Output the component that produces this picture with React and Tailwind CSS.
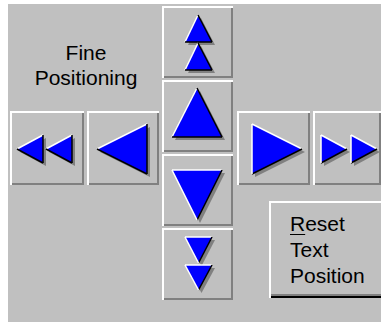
import React from "react";

function Tri({ pts }) {
  const cx = pts.reduce((s, p) => s + p[0], 0) / pts.length;
  const cy = pts.reduce((s, p) => s + p[1], 0) / pts.length;
  const str = (arr) => arr.map((p) => p.join(",")).join(" ");
  const shadow = pts.map((p) => [p[0] + 3, p[1] + 3]);
  const edges = pts.map((p, i) => {
    const q = pts[(i + 1) % pts.length];
    let nx = q[1] - p[1];
    let ny = -(q[0] - p[0]);
    const mx = (p[0] + q[0]) / 2 - cx;
    const my = (p[1] + q[1]) / 2 - cy;
    if (nx * mx + ny * my < 0) {
      nx = -nx;
      ny = -ny;
    }
    const light = nx + ny < 0;
    return (
      <line
        key={i}
        x1={p[0]}
        y1={p[1]}
        x2={q[0]}
        y2={q[1]}
        stroke={light ? "#ffffff" : "#000000"}
        strokeWidth="1.5"
      />
    );
  });
  return (
    <g>
      <polygon points={str(shadow)} fill="#808080" />
      <polygon points={str(pts)} fill="#0000ff" />
      {edges}
    </g>
  );
}

function ArrowButton({ w, h, tris }) {
  return (
    <div
      className="bg-[#c0c0c0] shadow-[inset_2px_2px_0_#ffffff,inset_-2px_-2px_0_#808080] shrink-0"
      style={{ width: w, height: h }}
    >
      <svg width={w} height={h} viewBox={`0 0 ${w} ${h}`} className="block">
        {tris.map((t, i) => (
          <Tri key={i} pts={t} />
        ))}
      </svg>
    </div>
  );
}

export default function App() {
  const font = { fontFamily: '"Liberation Sans", Arial, sans-serif' };
  return (
    <div className="w-[381px] h-[322px] bg-white overflow-hidden pl-[8px] pt-[4px]">
      <div
        className="w-[373px] h-[318px] bg-[#c0c0c0] flex overflow-hidden text-black"
        style={font}
      >
        {/* left column */}
        <div className="w-[154px] shrink-0 flex flex-col pt-[36px]">
          <div className="h-[50px] text-[21px] leading-[25px] text-center pl-[2px]">
            <div>Fine</div>
            <div>Positioning</div>
          </div>
          <div className="mt-[21px] pl-[2px] flex gap-[3px]">
            <ArrowButton
              w={74}
              h={74}
              tris={[
                [
                  [7, 38],
                  [33, 24],
                  [33, 52],
                ],
                [
                  [36, 38],
                  [62, 24],
                  [62, 52],
                ],
              ]}
            />
            <ArrowButton
              w={72}
              h={74}
              tris={[
                [
                  [10, 38],
                  [60, 13],
                  [60, 63],
                ],
              ]}
            />
          </div>
        </div>

        {/* center column */}
        <div className="w-[71px] shrink-0 flex flex-col gap-[2px] pt-[2px]">
          <ArrowButton
            w={71}
            h={72}
            tris={[
              [
                [36, 9],
                [23, 36],
                [50, 36],
              ],
              [
                [36, 37],
                [23, 64],
                [50, 64],
              ],
            ]}
          />
          <ArrowButton
            w={71}
            h={72}
            tris={[
              [
                [35, 8],
                [10, 57],
                [60, 57],
              ],
            ]}
          />
          <ArrowButton
            w={71}
            h={72}
            tris={[
              [
                [10, 16],
                [60, 16],
                [35, 66],
              ],
            ]}
          />
          <ArrowButton
            w={71}
            h={72}
            tris={[
              [
                [23, 9],
                [50, 9],
                [36.5, 35],
              ],
              [
                [23, 37],
                [50, 37],
                [36.5, 62],
              ],
            ]}
          />
        </div>

        {/* right column */}
        <div className="w-[148px] shrink-0 pl-[4px] pt-[107px] flex flex-col">
          <div className="flex gap-[3px]">
            <ArrowButton
              w={73}
              h={74}
              tris={[
                [
                  [15, 13],
                  [65, 38],
                  [15, 63],
                ],
              ]}
            />
            <ArrowButton
              w={68}
              h={74}
              tris={[
                [
                  [8, 24],
                  [34, 38],
                  [8, 52],
                ],
                [
                  [38, 24],
                  [64, 38],
                  [38, 52],
                ],
              ]}
            />
          </div>
          <div className="mt-[16px] ml-[32px] w-[116px] h-[97px] shrink-0 bg-[#c0c0c0] shadow-[inset_2px_2px_0_#ffffff,inset_-2px_-2px_0_#000000,inset_-4px_-4px_0_#808080] pl-[21px] pt-[10px] text-[21px] leading-[26px]">
            <div>
              <span className="underline decoration-1 underline-offset-[3px]">R</span>
              eset
            </div>
            <div>Text</div>
            <div>Position</div>
          </div>
        </div>
      </div>
    </div>
  );
}
